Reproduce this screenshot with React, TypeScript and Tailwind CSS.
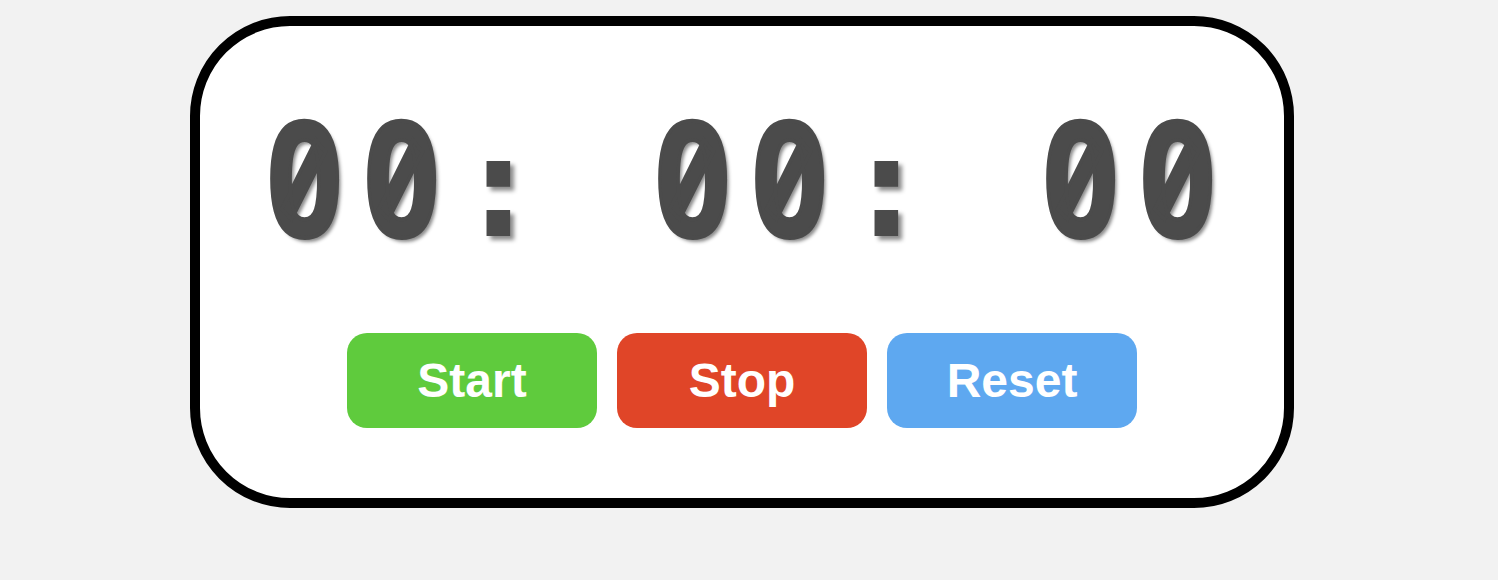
function Digit({ c }: { c: string }) {
  return (
    <span className="inline-block w-[97px] scale-x-[0.82] text-center [-webkit-text-stroke:4px_#4b4b4b]">{c}</span>
  );
}
function Colon() {
  return (
    <span className="inline-block w-[97px] text-center text-[145px]" style={{ fontFamily: '"DejaVu Sans Mono", monospace' }}>
      :
    </span>
  );
}
function Space() {
  return <span className="inline-block w-[97px]"> </span>;
}

export default function App() {
  return (
    <div className="min-h-[580px] w-full bg-[#f2f2f2] pt-[16px]">
      <div className="ml-[190px] flex w-[1104px] flex-col items-center rounded-[100px] border-[10px] border-black bg-white pt-[55px] pb-[70px]">
        <div
          className="h-[186px] whitespace-pre pr-[2px] text-[160px] leading-[186px] font-bold text-[#4b4b4b] [text-shadow:4px_4px_4px_rgba(0,0,0,0.45)]"
          style={{ fontFamily: '"Noto Sans Mono", monospace' }}
        >
          <Digit c="0" />
          <Digit c="0" />
          <Colon />
          <Space />
          <Digit c="0" />
          <Digit c="0" />
          <Colon />
          <Space />
          <Digit c="0" />
          <Digit c="0" />
        </div>
        <div
          className="mt-[66px] flex gap-[20px] text-[48px] font-bold text-white"
          style={{ fontFamily: '"Liberation Sans", Arial, sans-serif' }}
        >
          <button className="flex h-[95px] w-[250px] items-center justify-center rounded-[20px] bg-[#5fcb3d]">Start</button>
          <button className="flex h-[95px] w-[250px] items-center justify-center rounded-[20px] bg-[#e04528]">Stop</button>
          <button className="flex h-[95px] w-[250px] items-center justify-center rounded-[20px] bg-[#5ea8f0]">Reset</button>
        </div>
      </div>
    </div>
  );
}
